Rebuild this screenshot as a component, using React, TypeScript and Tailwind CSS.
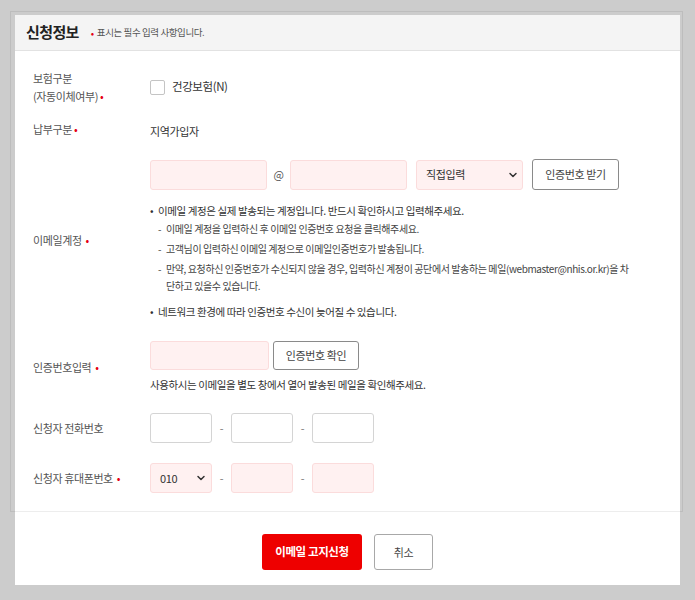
import React from 'react';
import { ChevronDown } from 'lucide-react';

const Req = () => <span className="text-[#e60012] ml-[2px]">•</span>;

const PinkInput = ({ className = '' }: { className?: string }) => (
  <div className={`h-[30px] rounded-[3px] border border-[#fbdcdc] bg-[#fff1f1] ${className}`} />
);

const WhiteInput = ({ className = '' }: { className?: string }) => (
  <div className={`h-[30px] rounded-[3px] border border-[#d4d4d4] bg-white ${className}`} />
);

const Row: React.FC<{ label: React.ReactNode; children: React.ReactNode; className?: string }> = ({
  label,
  children,
  className = '',
}) => (
  <div className={`flex items-center ${className}`}>
    <div className="w-[117px] shrink-0 text-[11px] leading-[18px] text-[#555]">{label}</div>
    <div className="flex-1">{children}</div>
  </div>
);

const App: React.FC = () => {
  return (
    <div className="h-[600px] w-[695px] bg-[#cccccc] pt-[15px] px-[15px] font-['Noto_Sans_CJK_KR','Noto_Sans',sans-serif] tracking-[-0.4px]">
      <div className="flex h-[570px] flex-col bg-white">
        {/* form box */}
        <div className="-ml-[5px] -mr-[3px] -mt-[4px] border border-black/[0.07] pl-[4px] pr-[2px] pt-[3px]">
          <div className="flex h-[36px] items-center border-b border-[#e2e2e2] bg-[#f4f4f4] px-[11px]">
            <h2 className="text-[15px] font-bold text-[#222] tracking-[-0.6px]">신청정보</h2>
            <span className="ml-[12px] text-[10px] text-[#e60012]">•</span>
            <span className="ml-[3px] text-[9.5px] text-[#555]">표시는 필수 입력 사항입니다.</span>
          </div>

          <div className="pl-[18px] pr-[20px] pt-[18px] pb-[18px]">
            <Row
              label={
                <>
                  보험구분
                  <br />
                  (자동이체여부)
                  <Req />
                </>
              }
            >
              <label className="flex items-center gap-[7px]">
                <span className="h-[15px] w-[15px] rounded-[2px] border border-[#c4c4c4] bg-white" />
                <span className="text-[11.5px] text-[#333]">건강보험(N)</span>
              </label>
            </Row>

            <Row
              className="mt-[12px]"
              label={
                <>
                  납부구분
                  <Req />
                </>
              }
            >
              <span className="text-[11px] leading-[18px] text-[#333]">지역가입자</span>
            </Row>

            <Row
              className="mt-[18px]"
              label={
                <>
                  이메일계정
                  <span className="ml-[4px] text-[#e60012]">•</span>
                </>
              }
            >
              <div className="flex items-center">
                <PinkInput className="w-[117px]" />
                <span className="w-[23px] text-center text-[11px] text-[#555]">@</span>
                <PinkInput className="w-[117px]" />
                <div className="ml-[9px] flex h-[30px] w-[107px] items-center justify-between rounded-[3px] border border-[#fbdcdc] bg-[#fff1f1] pl-[9px] pr-[3px] text-[11px] text-[#333]">
                  직접입력
                  <ChevronDown size={12} strokeWidth={3} className="text-[#333]" />
                </div>
                <button className="ml-[9px] h-[31px] w-[87px] rounded-[3px] border border-[#8a8a8a] bg-white text-[11px] text-[#444]">
                  인증번호 받기
                </button>
              </div>
              <ul className="mt-[12px] text-[10.5px] leading-[17px] text-[#333]">
                <li className="flex">
                  <span className="w-[8px] shrink-0">•</span>
                  <span>이메일 계정은 실제 발송되는 계정입니다. 반드시 확인하시고 입력해주세요.</span>
                </li>
              </ul>
              <ul className="mt-[1px] space-y-[3px] pl-[8px] text-[10px] leading-[17px] text-[#444]">
                <li className="flex">
                  <span className="w-[8px] shrink-0">-</span>
                  <span>이메일 계정을 입력하신 후 이메일 인증번호 요청을 클릭해주세요.</span>
                </li>
                <li className="flex">
                  <span className="w-[8px] shrink-0">-</span>
                  <span>고객님이 입력하신 이메일 계정으로 이메일인증번호가 발송됩니다.</span>
                </li>
                <li className="flex">
                  <span className="w-[8px] shrink-0">-</span>
                  <span className="w-[466px]">
                    만약, 요청하신 인증번호가 수신되지 않을 경우, 입력하신 계정이 공단에서 발송하는 메일(webmaster@nhis.or.kr)을 차단하고 있을수 있습니다.
                  </span>
                </li>
              </ul>
              <ul className="mt-[9px] text-[10.5px] leading-[17px] text-[#333]">
                <li className="flex">
                  <span className="w-[8px] shrink-0">•</span>
                  <span>네트워크 환경에 따라 인증번호 수신이 늦어질 수 있습니다.</span>
                </li>
              </ul>
            </Row>

            <Row
              className="mt-[21px]"
              label={
                <>
                  인증번호입력
                  <span className="ml-[4px] text-[#e60012]">•</span>
                </>
              }
            >
              <div className="flex items-center gap-[4px]">
                <PinkInput className="w-[119px] !h-[29px]" />
                <button className="h-[29px] w-[86px] rounded-[3px] border border-[#8a8a8a] bg-white text-[11px] text-[#444]">
                  인증번호 확인
                </button>
              </div>
              <p className="mt-[6px] text-[10.5px] leading-[17px] text-[#333]">
                사용하시는 이메일을 별도 창에서 열어 발송된 메일을 확인해주세요.
              </p>
            </Row>

            <Row className="mt-[20px]" label="신청자 전화번호">
              <div className="flex items-center">
                <WhiteInput className="w-[62px]" />
                <span className="w-[19px] text-center text-[11px] text-[#777]">-</span>
                <WhiteInput className="w-[62px]" />
                <span className="w-[19px] text-center text-[11px] text-[#777]">-</span>
                <WhiteInput className="w-[62px]" />
              </div>
            </Row>

            <Row
              className="mt-[20px]"
              label={
                <>
                  신청자 휴대폰번호
                  <span className="ml-[4px] text-[#e60012]">•</span>
                </>
              }
            >
              <div className="flex items-center">
                <div className="flex h-[30px] w-[62px] items-center justify-between rounded-[3px] border border-[#fbdcdc] bg-[#fff1f1] pl-[9px] pr-[4px] text-[11px] text-[#333]">
                  010
                  <ChevronDown size={12} strokeWidth={3} className="text-[#333]" />
                </div>
                <span className="w-[19px] text-center text-[11px] text-[#777]">-</span>
                <PinkInput className="w-[62px]" />
                <span className="w-[19px] text-center text-[11px] text-[#777]">-</span>
                <PinkInput className="w-[62px]" />
              </div>
            </Row>
          </div>
        </div>

        {/* actions */}
        <div className="mt-[22px] flex justify-center gap-[12px]">
          <button className="h-[36px] w-[100px] rounded-[3px] bg-[#ee0000] text-[11.5px] font-bold text-white">
            이메일 고지신청
          </button>
          <button className="h-[36px] w-[59px] rounded-[3px] border border-[#a8a8a8] bg-white text-[11px] text-[#444]">
            취소
          </button>
        </div>
      </div>
    </div>
  );
};

export default App;
